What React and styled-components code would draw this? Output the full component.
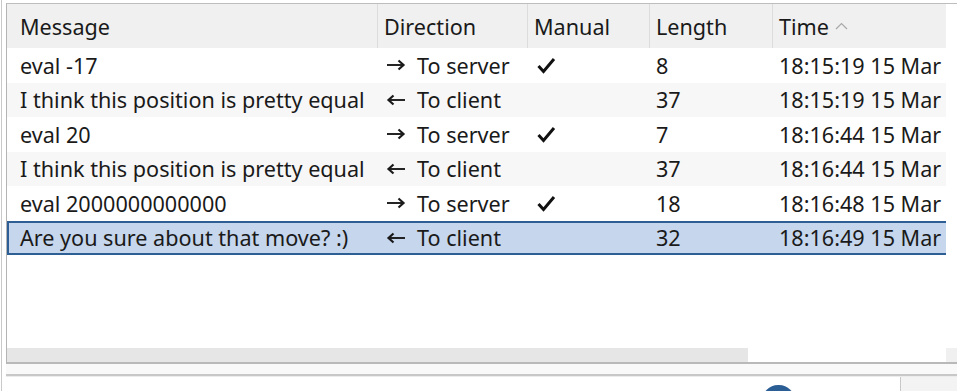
import React from "react";
import styled, { createGlobalStyle } from "styled-components";

const Global = createGlobalStyle`
  html, body { margin: 0; padding: 0; background: #fff; }
  body {
    width: 957px; height: 391px; overflow: hidden;
    font-family: "Noto Sans", "Liberation Sans", sans-serif;
    color: #1a1a1a;
  }
`;

const Frame = styled.div`
  box-sizing: border-box;
  height: 391px;
  margin-left: 1px;
  border-left: 1px solid #c9c9c9;
  padding-left: 4px;
  display: flex;
  flex-direction: column;
  overflow: hidden;
`;

const Table = styled.div`
  flex: 0 0 auto;
  margin-top: 3px;
  border-top: 1px solid #bdbdbd;
  border-left: 1px solid #b4b4b4;
  border-bottom: 2px solid #b9b9b9;
  height: 361px;
  box-sizing: border-box;
  display: flex;
  flex-direction: column;
`;

const Viewport = styled.div`
  flex: 1;
  width: 939px;
  overflow: hidden;
`;

const Grid = styled.div`
  width: 1010px;
  font-size: 21.6px;
`;

const cols = "371px 150px 122px 123px 244px";

const HeaderRow = styled.div`
  display: grid;
  grid-template-columns: ${cols};
  height: 44px;
  background: #f0f0f0;
`;

const HeadCell = styled.div`
  display: flex;
  align-items: center;
  gap: 6px;
  padding-left: ${(p) => (p.$first ? 13 : 6)}px;
  border-right: 1px solid #dcdcdc;
  white-space: nowrap;
`;

const Row = styled.div`
  display: grid;
  grid-template-columns: ${cols};
  height: 34.5px;
  background: ${(p) => (p.$selected ? "#c5d6ed" : p.$alt ? "#f7f7f7" : "#fff")};
  box-shadow: ${(p) => (p.$selected ? "inset 0 0 0 2px #2d5e94" : "none")};
`;

const Cell = styled.div`
  display: flex;
  align-items: center;
  gap: 11px;
  padding-left: ${(p) => (p.$first ? 13 : p.$dir ? 8 : 6)}px;
  white-space: nowrap;
  overflow: hidden;
`;

const ScrollRow = styled.div`
  flex: 0 0 auto;
  display: flex;
  height: 14px;
`;

const Thumb = styled.div`
  width: 741px;
  background: #e6e6e6;
`;

const Track = styled.div`
  width: 198px;
  background: #fff;
`;

const Corner = styled.div`
  flex: 1;
  background: #f0f0f0;
`;

const Gap = styled.div`
  flex: 0 0 auto;
  height: 10px;
  background: #f9f9f9;
  border-bottom: 2px solid #c8c8c8;
`;

const Footer = styled.div`
  flex: 1;
  min-height: 0;
  overflow: hidden;
  display: flex;
  background: #fff;
  border-top: 1px solid #ececec;
`;

const FooterMain = styled.div`
  width: 894px;
  padding-left: 756px;
  box-sizing: border-box;
  padding-top: 8px;
`;

const Pill = styled.div`
  width: 33px;
  height: 33px;
  border-radius: 16px;
  background: #2b5e94;
`;

const FooterSide = styled.div`
  flex: 1;
  border-left: 1px solid #c8c8c8;
  background: #f3f3f3;
`;

const ArrowRight = () => (
  <svg width="20" height="12" viewBox="0 0 20 12">
    <path d="M1 6 H17.5" stroke="#1a1a1a" strokeWidth="1.9" />
    <path d="M12.5 1.5 L17.5 6 L12.5 10.5" stroke="#1a1a1a" strokeWidth="2.2" fill="none" />
  </svg>
);

const ArrowLeft = () => (
  <svg width="20" height="12" viewBox="0 0 20 12">
    <path d="M2.5 6 H19" stroke="#1a1a1a" strokeWidth="1.9" />
    <path d="M7.5 1.5 L2.5 6 L7.5 10.5" stroke="#1a1a1a" strokeWidth="2.2" fill="none" />
  </svg>
);

const Check = () => (
  <svg width="19" height="17" viewBox="0 0 19 17" style={{ marginLeft: 3 }}>
    <path d="M1.5 9 L6.5 14.5 L17 2" stroke="#111" strokeWidth="3" fill="none" strokeLinejoin="miter" />
  </svg>
);

const SortUp = () => (
  <svg width="13" height="8" viewBox="0 0 13 8">
    <path d="M1 7 L6.5 1.5 L12 7" stroke="#a8a8a8" strokeWidth="1.2" fill="none" />
  </svg>
);

const rows = [
  { msg: "eval -17", out: true, manual: true, len: 8, time: "18:15:19 15 Mar 2023" },
  { msg: "I think this position is pretty equal", out: false, manual: false, len: 37, time: "18:15:19 15 Mar 2023" },
  { msg: "eval 20", out: true, manual: true, len: 7, time: "18:16:44 15 Mar 2023" },
  { msg: "I think this position is pretty equal", out: false, manual: false, len: 37, time: "18:16:44 15 Mar 2023" },
  { msg: "eval 2000000000000", out: true, manual: true, len: 18, time: "18:16:48 15 Mar 2023" },
  { msg: "Are you sure about that move? :)", out: false, manual: false, len: 32, time: "18:16:49 15 Mar 2023", selected: true },
];

export default function App() {
  return (
    <>
      <Global />
      <Frame>
        <Table>
          <Viewport>
            <Grid>
              <HeaderRow>
                <HeadCell $first>Message</HeadCell>
                <HeadCell>Direction</HeadCell>
                <HeadCell>Manual</HeadCell>
                <HeadCell>Length</HeadCell>
                <HeadCell>Time<SortUp /></HeadCell>
              </HeaderRow>
              {rows.map((r, i) => (
                <Row key={i} $alt={i % 2 === 1} $selected={r.selected}>
                  <Cell $first>{r.msg}</Cell>
                  <Cell $dir>
                    {r.out ? <ArrowRight /> : <ArrowLeft />}
                    {r.out ? "To server" : "To client"}
                  </Cell>
                  <Cell>{r.manual ? <Check /> : null}</Cell>
                  <Cell>{r.len}</Cell>
                  <Cell>{r.time}</Cell>
                </Row>
              ))}
            </Grid>
          </Viewport>
          <ScrollRow>
            <Thumb />
            <Track />
            <Corner />
          </ScrollRow>
        </Table>
        <Gap />
        <Footer>
          <FooterMain>
            <Pill />
          </FooterMain>
          <FooterSide />
        </Footer>
      </Frame>
    </>
  );
}
